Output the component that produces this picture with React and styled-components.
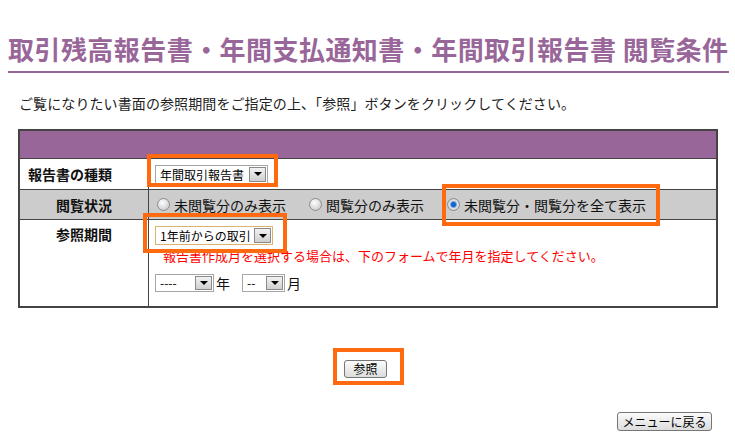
import styled, { createGlobalStyle } from 'styled-components';

const GlobalStyle = createGlobalStyle`
  html, body {
    margin: 0;
    padding: 0;
    background: #fff;
  }
  body {
    font-family: "Noto Sans CJK JP", "Noto Sans", sans-serif;
    color: #222;
  }
`;

const Page = styled.div`
  width: 735px;
  height: 444px;
  box-sizing: border-box;
  padding: 0 6px 0 8px;
  overflow: hidden;
`;

const Title = styled.h1`
  margin: 31px 0 0;
  padding-bottom: 4px;
  font-size: 26px;
  line-height: 36px;
  font-weight: 700;
  letter-spacing: 0.45px;
  color: #996699;
  border-bottom: 2px solid #996699;
  white-space: nowrap;
`;

const Lead = styled.p`
  margin: 20px 0 0 11px;
  font-size: 14px;
  line-height: 20px;
  letter-spacing: 0.1px;
  color: #222;
`;

const Form = styled.div`
  margin: 16px 0 0 10px;
  width: 700px;
  box-sizing: border-box;
  border: 2px solid #444;
  display: grid;
  grid-template-columns: 129px 1fr;
`;

const HeaderBar = styled.div`
  grid-column: 1 / -1;
  height: 27px;
  background: #996699;
  border-bottom: 1px solid #444;
`;

const Label = styled.div`
  box-sizing: border-box;
  height: ${p => p.$h}px;
  border-right: 1px solid #444;
  border-bottom: ${p => (p.$last ? 'none' : '1px solid #444')};
  background: ${p => (p.$gray ? '#cccccc' : '#fff')};
  display: flex;
  align-items: ${p => (p.$top ? 'flex-start' : 'center')};
  justify-content: ${p => (p.$left ? 'flex-start' : 'center')};
  padding: ${p => (p.$top ? '4px 0 0' : '0')} ${p => (p.$left ? '8px' : '0')};
  font-size: 14px;
  line-height: 20px;
  font-weight: 700;
  color: #111;
`;

const Field = styled.div`
  box-sizing: border-box;
  height: ${p => p.$h}px;
  border-bottom: ${p => (p.$last ? 'none' : '1px solid #444')};
  background: ${p => (p.$gray ? '#cccccc' : '#fff')};
  display: flex;
  flex-direction: ${p => (p.$stack ? 'column' : 'row')};
  align-items: ${p => (p.$stack ? 'flex-start' : 'center')};
  padding: ${p => (p.$stack ? '6px 0 0 6px' : `0 0 0 ${p.$pad || 6}px`)};
  font-size: 14px;
  line-height: 20px;
  color: #111;
`;

const Highlight = styled.span`
  position: relative;
  display: inline-flex;

  &::after {
    content: '';
    position: absolute;
    top: -${p => p.$t}px;
    right: -${p => p.$r}px;
    bottom: -${p => p.$b}px;
    left: -${p => p.$l}px;
    border: 4px solid #ff6a10;
    pointer-events: none;
  }
`;

const SelectBox = styled.span`
  display: inline-flex;
  align-items: stretch;
  box-sizing: border-box;
  width: ${p => p.$w}px;
  height: ${p => p.$h || 19}px;
  padding: 1px;
  border: 1px solid ${p => p.$border || '#a6a6a6'};
  background: #fff;
`;

const SelectValue = styled.span`
  flex: 1;
  padding-left: 3px;
  font-size: 12px;
  line-height: ${p => p.$lh || 15}px;
  color: #000;
  white-space: nowrap;
`;

const SelectArrow = styled.span`
  width: 17px;
  box-sizing: border-box;
  border: 1px solid #8a8a8a;
  background: linear-gradient(#f2f2f2, #cfcfcf);
  display: flex;
  align-items: center;
  justify-content: center;

  &::before {
    content: '';
    border-left: 4px solid transparent;
    border-right: 4px solid transparent;
    border-top: 4px solid #000;
  }
`;

const Select = ({ value, width, height, border, lh }) => (
  <SelectBox $w={width} $h={height} $border={border}>
    <SelectValue $lh={lh}>{value}</SelectValue>
    <SelectArrow />
  </SelectBox>
);

const RadioGroup = styled.div`
  display: flex;
  align-items: center;
  gap: 23px;
`;

const RadioLabel = styled.span`
  display: inline-flex;
  align-items: center;
  gap: 4px;
  white-space: nowrap;
`;

const RadioDot = styled.span`
  width: 13px;
  height: 13px;
  box-sizing: border-box;
  border-radius: 50%;
  border: 1px solid #8c8c8c;
  background: ${p =>
    p.$on
      ? 'radial-gradient(circle, #1665c8 0 2px, #6aa7e6 3px, #e4e4e4 4px, #c8c8c8 6px)'
      : 'radial-gradient(circle at 40% 35%, #ffffff, #d2d2d2 70%)'};
`;

const Radio = ({ on, children }) => (
  <RadioLabel>
    <RadioDot $on={on} />
    {children}
  </RadioLabel>
);

const Note = styled.div`
  margin: 2px 0 0 8px;
  font-size: 13px;
  line-height: 18px;
  color: #ff0000;
  white-space: nowrap;
`;

const DateRow = styled.div`
  margin-top: 9px;
  display: flex;
  align-items: center;
  gap: 2px;
  font-size: 14px;
  line-height: 18px;
`;

const Unit = styled.span`
  margin-right: ${p => p.$gap || 0}px;
`;

const Actions = styled.div`
  display: flex;
  justify-content: center;
  margin-top: 52px;
  padding-right: 6px;
`;

const MenuRow = styled.div`
  display: flex;
  justify-content: flex-end;
  margin-top: 34px;
  padding-right: 17px;
`;

const Button = styled.button`
  box-sizing: border-box;
  height: ${p => p.$h}px;
  width: ${p => p.$w}px;
  padding: 0;
  font-family: inherit;
  font-size: 12px;
  line-height: 1;
  color: #000;
  border: 1px solid #767676;
  border-radius: 3px;
  background: linear-gradient(#fbfbfb, #dcdcdc);
`;

export default function App() {
  return (
    <>
      <GlobalStyle />
      <Page>
        <Title>取引残高報告書・年間支払通知書・年間取引報告書 閲覧条件</Title>
        <Lead>ご覧になりたい書面の参照期間をご指定の上、「参照」ボタンをクリックしてください。</Lead>

        <Form>
          <HeaderBar />

          <Label $h={31} $left>報告書の種類</Label>
          <Field $h={31}>
            <Highlight $t={11} $r={10} $b={3} $l={8}>
              <Select value="年間取引報告書" width={113} />
            </Highlight>
          </Field>

          <Label $h={30} $gray>閲覧状況</Label>
          <Field $h={30} $gray $pad={8}>
            <RadioGroup>
              <Radio>未閲覧分のみ表示</Radio>
              <Radio>閲覧分のみ表示</Radio>
              <Highlight $t={11} $r={14} $b={11} $l={5}>
                <Radio on>未閲覧分・閲覧分を全て表示</Radio>
              </Highlight>
            </RadioGroup>
          </Field>

          <Label $h={86} $top $last>参照期間</Label>
          <Field $h={86} $stack $last>
            <Highlight $t={13} $r={14} $b={8} $l={12}>
              <Select value="1年前からの取引" width={118} height={19} border="#d9b46c" />
            </Highlight>
            <Note>報告書作成月を選択する場合は、下のフォームで年月を指定してください。</Note>
            <DateRow>
              <Select value="----" width={59} height={18} lh={14} />
              <Unit $gap={10}>年</Unit>
              <Select value="--" width={43} height={18} lh={14} />
              <Unit>月</Unit>
            </DateRow>
          </Field>
        </Form>

        <Actions>
          <Highlight $t={12} $r={17} $b={7} $l={11}>
            <Button $w={43} $h={18}>参照</Button>
          </Highlight>
        </Actions>

        <MenuRow>
          <Button $w={95} $h={19}>メニューに戻る</Button>
        </MenuRow>
      </Page>
    </>
  );
}
